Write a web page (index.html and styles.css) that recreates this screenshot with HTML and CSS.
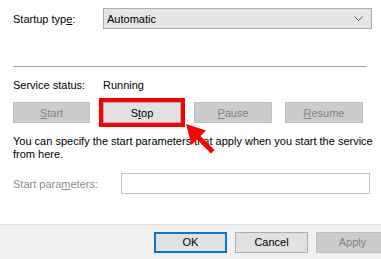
FILE: index.html
```html
<!DOCTYPE html>
<html>
<head>
<meta charset="utf-8">
<link rel="stylesheet" href="styles.css">
</head>
<body>
<div class="dialog">
  <div class="main">
    <div class="row startup">
      <span class="label">Startup typ<u>e</u>:</span>
      <div class="combo">
        <span>Automatic</span>
        <svg class="chev" width="9" height="5" viewBox="0 0 9 5"><path d="M0.5 0.5 L4.5 4.5 L8.5 0.5" fill="none" stroke="#555" stroke-width="1"/></svg>
      </div>
    </div>
    <div class="sep"></div>
    <div class="row status">
      <span class="label">Service status:</span>
      <span>Running</span>
    </div>
    <div class="buttons">
      <div class="btn disabled first"><u>S</u>tart</div>
      <div class="highlight"><div class="btn">S<u>t</u>op</div></div>
      <div class="btn disabled"><u>P</u>ause</div>
      <div class="btn disabled"><u>R</u>esume</div>
    </div>
    <p class="info">You can specify the start parameters that apply when you start the service from here.</p>
    <div class="row params">
      <span class="label gray">Start para<u>m</u>eters:</span>
      <div class="input"></div>
    </div>
  </div>
  <div class="footer">
    <div class="btn default">OK</div>
    <div class="btn">Cancel</div>
    <div class="btn disabled">Apply</div>
  </div>
</div>
<svg class="arrow" width="381" height="259" viewBox="0 0 381 259">
  <polygon points="186,124 206,130.5 200.5,136 214.5,150 211,153.5 197,139.5 191.5,145" fill="#ff0000"/>
</svg>
</body>
</html>
```

FILE: styles.css
```css
html, body {
  margin: 0;
  padding: 0;
  background: #ffffff;
  width: 381px;
  height: 259px;
  overflow: hidden;
  font-family: "Liberation Sans", Arial, sans-serif;
  font-size: 11px;
  color: #000000;
}
body { position: relative; }
u { text-decoration: underline; text-underline-offset: 1px; }
.dialog { display: flex; flex-direction: column; height: 259px; }
.main { flex: 1; padding: 8px 0 0 13px; }
.row { display: flex; align-items: center; }
.startup .label { width: 90px; }
.combo {
  width: 256px;
  height: 19px;
  border: 1px solid #adadad;
  background: #e5e5e5;
  display: flex;
  align-items: center;
  justify-content: space-between;
  padding: 0 8px 0 3px;
}
.sep { margin-top: 37px; width: 353px; border-top: 1px solid #a0a0a0; }
.status { margin-top: 11px; height: 14px; }
.status .label { width: 90px; }
.buttons { display: flex; gap: 13px; margin-top: 10px; align-items: center; }
.btn {
  width: 76px;
  height: 19px;
  border: 1px solid #adadad;
  background: #e1e1e1;
  display: flex;
  align-items: center;
  justify-content: center;
  flex: none;
}
.btn.first { width: 75px; }
.btn.disabled { background: #cccccc; border-color: #bfbfbf; color: #838383; }
.highlight { border: 4px solid #ff0000; margin: -4px; }
.info { margin: 12px 0 0; width: 366px; line-height: 13px; }
.params { margin-top: 12px; }
.params .label { width: 108px; }
.gray { color: #8c8c8c; }
.input { width: 247px; height: 19px; border: 1px solid #bfbfbf; background: #ffffff; }
.footer {
  height: 34px;
  border-top: 1px solid #dfdfdf;
  background: #f0f0f0;
  display: flex;
  align-items: center;
  gap: 8px;
  padding-left: 154px;
  overflow: hidden;
}
.footer .btn { width: 71px; }
.footer .btn.default { border: 2px solid #0078d7; width: 69px; height: 17px; }
.arrow { position: absolute; left: 0; top: 0; pointer-events: none; }
```
